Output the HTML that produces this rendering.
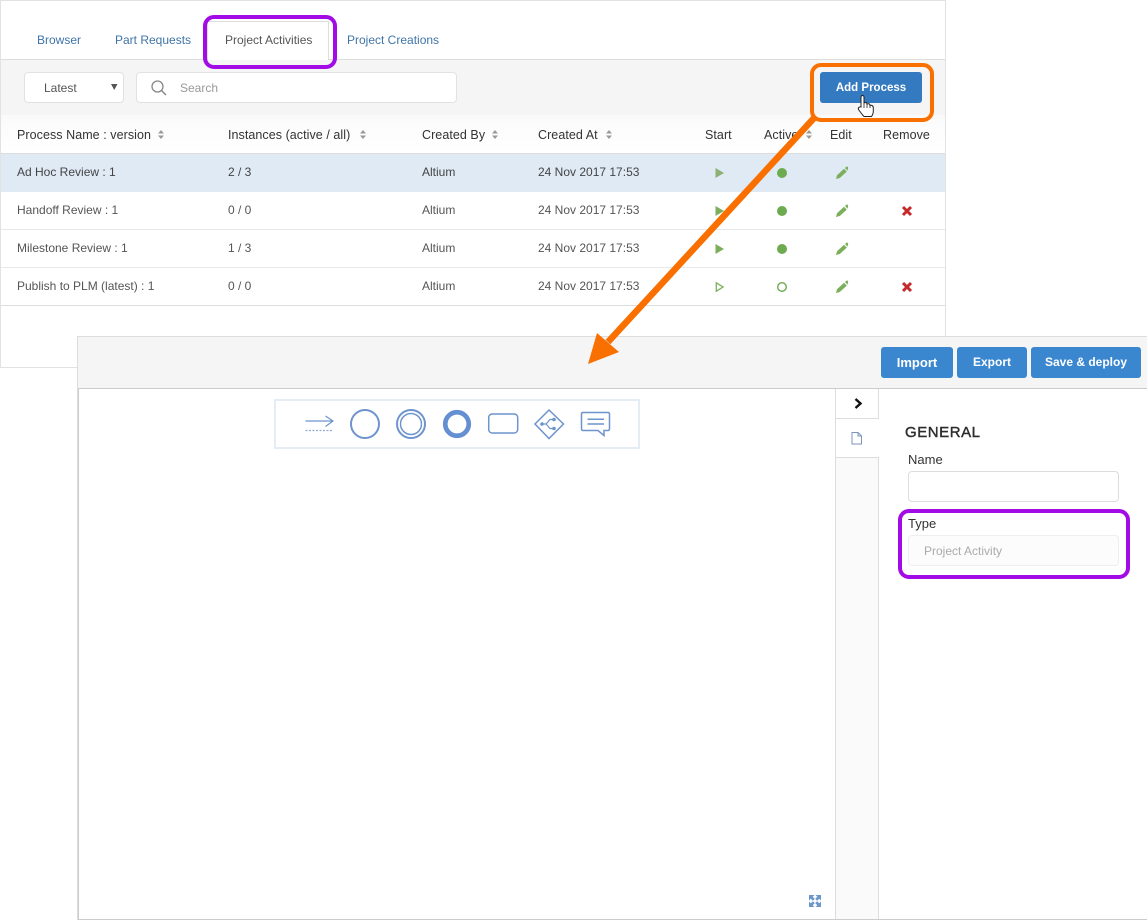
<!DOCTYPE html>
<html><head><meta charset="utf-8">
<style>
html,body{margin:0;padding:0;background:#fff;}
body{width:1147px;height:920px;position:relative;overflow:hidden;font-family:"Liberation Sans",sans-serif;}
.a{position:absolute;}
.t{position:absolute;white-space:nowrap;line-height:16px;}
.tab{font-size:12px;color:#3f74a8;top:32px;}
.h{font-size:12.500px;color:#333;top:127px;letter-spacing:.06px;}
.c{font-size:12px;color:#555;}
.hl{position:absolute;left:1px;width:944px;height:1px;background:#e8e8e8;}
.btn{position:absolute;background:#3a87cf;border-radius:3px;color:#fff;font-weight:bold;font-size:12px;text-align:center;line-height:31px;top:347px;height:31px;}
svg{position:absolute;overflow:visible;}
</style></head><body>

<!-- top panel -->
<div class="a" style="left:0;top:0;width:946px;height:368px;border:1px solid #e2e2e2;box-sizing:border-box;background:#fff;"></div>
<div class="a" style="left:1px;top:59px;width:944px;height:1px;background:#ddd;"></div>
<div class="a" style="left:1px;top:60px;width:944px;height:55px;background:#f5f5f5;"></div>
<div class="a" style="left:207px;top:21px;width:122px;height:39px;background:#fff;border:1px solid #ddd;border-bottom:none;box-sizing:border-box;"></div>
<div class="t tab" style="left:37px;">Browser</div>
<div class="t tab" style="left:115px;">Part Requests</div>
<div class="t tab" style="left:225px;color:#555;">Project Activities</div>
<div class="t tab" style="left:347px;">Project Creations</div>

<div class="a" style="left:24px;top:72px;width:100px;height:31px;background:#fff;border:1px solid #e2e2e2;border-radius:4px;box-sizing:border-box;"></div>
<div class="t" style="left:44px;top:80px;font-size:12px;color:#555;">Latest</div>
<svg style="left:111px;top:84px" width="7" height="6"><path d="M0 0H6.500L3.250 6Z" fill="#555"/></svg>
<div class="a" style="left:136px;top:72px;width:321px;height:31px;background:#fff;border:1px solid #e2e2e2;border-radius:4px;box-sizing:border-box;"></div>
<svg style="left:151px;top:80px" width="16" height="16"><circle cx="6.500" cy="6.500" r="5.500" fill="none" stroke="#888" stroke-width="1.300"/><path d="M10.500 10.500L15 15" stroke="#888" stroke-width="1.500"/></svg>
<div class="t" style="left:180px;top:80px;font-size:12px;color:#999;">Search</div>

<!-- header -->
<div class="a" style="left:1px;top:115px;width:944px;height:38px;background:linear-gradient(#fafafa,#fff);"></div>
<div class="a" style="left:1px;top:153px;width:944px;height:1px;background:#ddd;"></div>
<div class="t h" style="left:17px;">Process Name : version</div>
<div class="t h" style="left:228px;">Instances (active / all)</div>
<div class="t h" style="left:422px;">Created By</div>
<div class="t h" style="left:538px;">Created At</div>
<div class="t h" style="left:705px;">Start</div>
<div class="t h" style="left:764px;">Active</div>
<div class="t h" style="left:830px;">Edit</div>
<div class="t h" style="left:883px;">Remove</div>
<svg width="7" height="9" style="left:158px;top:130px"><path d="M0 3.500L3 0L6 3.500ZM0 5.500L3 9L6 5.500Z" fill="#999"/></svg>
<svg width="7" height="9" style="left:360px;top:130px"><path d="M0 3.500L3 0L6 3.500ZM0 5.500L3 9L6 5.500Z" fill="#999"/></svg>
<svg width="7" height="9" style="left:492px;top:130px"><path d="M0 3.500L3 0L6 3.500ZM0 5.500L3 9L6 5.500Z" fill="#999"/></svg>
<svg width="7" height="9" style="left:606px;top:130px"><path d="M0 3.500L3 0L6 3.500ZM0 5.500L3 9L6 5.500Z" fill="#999"/></svg>
<svg width="7" height="9" style="left:806px;top:130px"><path d="M0 3.500L3 0L6 3.500ZM0 5.500L3 9L6 5.500Z" fill="#999"/></svg>

<!-- rows -->
<div class="a" style="left:1px;top:154px;width:944px;height:38px;background:#dfeaf5;"></div>
<div class="hl" style="top:229px;"></div>
<div class="hl" style="top:267px;"></div>
<div class="hl" style="top:305px;background:#ddd;"></div>

<div class="t c" style="left:17px;top:164px;color:#444;">Ad Hoc Review : 1</div>
<div class="t c" style="left:228px;top:164px;color:#444;">2 / 3</div>
<div class="t c" style="left:422px;top:164px;color:#444;">Altium</div>
<div class="t c" style="left:538px;top:164px;color:#444;">24 Nov 2017 17:53</div>

<div class="t c" style="left:17px;top:202px;">Handoff Review : 1</div>
<div class="t c" style="left:228px;top:202px;">0 / 0</div>
<div class="t c" style="left:422px;top:202px;">Altium</div>
<div class="t c" style="left:538px;top:202px;">24 Nov 2017 17:53</div>

<div class="t c" style="left:17px;top:240px;">Milestone Review : 1</div>
<div class="t c" style="left:228px;top:240px;">1 / 3</div>
<div class="t c" style="left:422px;top:240px;">Altium</div>
<div class="t c" style="left:538px;top:240px;">24 Nov 2017 17:53</div>

<div class="t c" style="left:17px;top:278px;">Publish to PLM (latest) : 1</div>
<div class="t c" style="left:228px;top:278px;">0 / 0</div>
<div class="t c" style="left:422px;top:278px;">Altium</div>
<div class="t c" style="left:538px;top:278px;">24 Nov 2017 17:53</div>

<!-- row icons -->
<svg width="1147" height="920" style="left:0;top:0;">
<g fill="#7cae5c">
<path d="M715.500 168L724 173L715.500 178Z" fill="#8db174"/>
<path d="M715.500 206L724 211L715.500 216Z"/>
<path d="M715.500 244L724 249L715.500 254Z"/>
</g>
<path d="M716.300 282.800L723 287L716.300 291.200Z" fill="none" stroke="#7cae5c" stroke-width="1.300"/>
<circle cx="782" cy="173" r="5" fill="#6dab50"/>
<circle cx="782" cy="211" r="5" fill="#6dab50"/>
<circle cx="782" cy="249" r="5" fill="#6dab50"/>
<circle cx="782" cy="287" r="4.300" fill="none" stroke="#6dab50" stroke-width="1.400"/>
<g fill="#7cae5c">
<path d="M836 179L837 175.300L844 168.800L846.800 171.600L839.800 178Z M845 168L846.300 166.800Q847 166.300 847.700 166.800L848 167.300Q848.500 168 848 168.700L847.500 170.700Z"/>
<path d="M836 217L837 213.300L844 206.800L846.800 209.600L839.800 216Z M845 206L846.300 204.800Q847 204.300 847.700 204.800L848 205.300Q848.500 206 848 206.700L847.500 208.700Z"/>
<path d="M836 255L837 251.300L844 244.800L846.800 247.600L839.800 254Z M845 244L846.300 242.800Q847 242.300 847.700 242.800L848 243.300Q848.500 244 848 244.700L847.500 246.700Z"/>
<path d="M836 293L837 289.300L844 282.800L846.800 285.600L839.800 292Z M845 282L846.300 280.800Q847 280.300 847.700 280.800L848 281.300Q848.500 282 848 282.700L847.500 284.700Z"/>
</g>
<path d="M903 207L911 215M911 207L903 215" stroke="#c4292c" stroke-width="3"/>
<path d="M903 283L911 291M911 283L903 291" stroke="#c4292c" stroke-width="3"/>
</svg>

<!-- lower panel -->
<div class="a" style="left:77px;top:336px;width:1070px;height:52px;background:#f5f5f5;border-top:1px solid #ddd;border-left:1px solid #ddd;box-sizing:border-box;"></div>
<div class="a" style="left:78px;top:388px;width:1069px;height:532px;background:#fff;border:1px solid #ccc;border-right:none;box-sizing:border-box;"></div>
<div class="a" style="left:77px;top:388px;width:1px;height:532px;background:#ddd;"></div>
<div class="a" style="left:835px;top:389px;width:44px;height:530px;background:#fafafa;border-left:1px solid #ddd;border-right:1px solid #ddd;box-sizing:border-box;"></div>
<div class="a" style="left:835px;top:389px;width:44px;height:30px;background:#fff;border:1px solid #ddd;border-top:none;box-sizing:border-box;"></div>
<div class="a" style="left:836px;top:419px;width:43px;height:39px;background:#fff;border-bottom:1px solid #ddd;box-sizing:border-box;"></div>

<div class="btn" style="left:881px;width:72px;font-size:13px;">Import</div>
<div class="btn" style="left:957px;width:70px;">Export</div>
<div class="btn" style="left:1031px;width:110px;">Save &amp; deploy</div>

<svg width="1147" height="920" style="left:0;top:0;">
<path d="M855.500 399L860.500 403.500L855.500 408" fill="none" stroke="#111" stroke-width="2.400"/>
<path d="M852 432.500H858L861.500 436V444H852Z M858 432.500V436H861.500" fill="none" stroke="#7b93bd" stroke-width="1"/>
<!-- expand icon -->
<g fill="#6b97cb">
<path d="M809 895H814.500L812.700 896.800L814.800 898.900L812.900 900.800L810.800 898.700L809 900.500Z"/>
<path d="M821 895H815.500L817.300 896.800L815.200 898.900L817.100 900.800L819.200 898.700L821 900.500Z"/>
<path d="M809 907H814.500L812.700 905.200L814.800 903.100L812.900 901.200L810.800 903.300L809 901.500Z"/>
<path d="M821 907H815.500L817.300 905.200L815.200 903.100L817.100 901.200L819.200 903.300L821 901.500Z"/>
</g>
<!-- toolbar -->
<rect x="275" y="400" width="364" height="48" fill="#fff" stroke="#e6ecf6" stroke-width="2"/>
<g fill="none" stroke="#6d94cc">
<path d="M305.500 421H333M325.500 416L333 421L325.500 426.500" stroke-width="1.200"/>
<path d="M305.500 430.500H333" stroke-width="1.200" stroke-dasharray="2 1.500" stroke="#8ea9d6"/>
<circle cx="365" cy="424" r="14" stroke-width="2"/>
<circle cx="411" cy="424" r="14" stroke-width="2"/>
<circle cx="411" cy="424" r="10.500" stroke-width="1.500"/>
<circle cx="457" cy="424" r="11.750" stroke-width="4.700" stroke="#648fd3"/>
<rect x="488.700" y="414" width="29" height="19" rx="3.500" stroke-width="1.500"/>
<path d="M549 410L563.500 424L549 438.500L535 424Z" stroke-width="1.500"/>
<path d="M542 424H546L550 419.500H553M546 424L550 428.500H553" stroke-width="1.200"/>
<path d="M583 412.500H608Q609.500 412.500 609.500 414V428.500Q609.500 430.500 608 430.500H604V435.500L598 430.500H583Q581.500 430.500 581.500 428.500V414Q581.500 412.500 583 412.500Z" stroke-width="1.500"/>
<path d="M587.500 419.300H604M587.500 424H604" stroke-width="1.500"/>
</g>
<g fill="#6d94cc"><circle cx="542" cy="424" r="1.800"/><circle cx="554" cy="419.500" r="1.800"/><circle cx="554" cy="428.500" r="1.800"/></g>
</svg>

<!-- right panel -->
<div class="t" style="left:905px;top:425px;font-size:15px;color:#2c2c2c;letter-spacing:.55px;-webkit-text-stroke:.4px #2c2c2c;">GENERAL</div>
<div class="t" style="left:908px;top:452px;font-size:13px;color:#333;">Name</div>
<div class="a" style="left:908px;top:471px;width:211px;height:31px;background:#fff;border:1px solid #ddd;border-radius:4px;box-sizing:border-box;"></div>
<div class="t" style="left:908px;top:516px;font-size:13px;color:#333;">Type</div>
<div class="a" style="left:908px;top:535px;width:211px;height:31px;background:#fcfcfc;border:1px solid #eee;border-radius:4px;box-sizing:border-box;"></div>
<div class="t" style="left:924px;top:543px;font-size:12px;color:#aaa;">Project Activity</div>

<!-- Add Process button -->
<div class="a" style="left:820px;top:72px;width:102px;height:31px;background:#337ac0;border-radius:3px;color:#fff;font-weight:bold;font-size:11.500px;text-align:center;line-height:32px;">Add Process</div>

<!-- annotations -->
<div class="a" style="left:203px;top:15px;width:134px;height:54px;border:4px solid #a20be6;border-radius:11px;box-sizing:border-box;"></div>
<div class="a" style="left:898px;top:509px;width:232px;height:70px;border:4px solid #a20be6;border-radius:11px;box-sizing:border-box;"></div>
<div class="a" style="left:810px;top:63px;width:124px;height:59px;border:4px solid #f97000;border-radius:11px;box-sizing:border-box;"></div>
<svg width="1147" height="920" style="left:0;top:0;">
<path d="M815 117L608 342" stroke="#f97000" stroke-width="6.500"/>
<path d="M588 364L597 333L619 352Z" fill="#f97000"/>
<!-- hand cursor -->
<path d="M861 107V97.500Q861 95.500 862.500 95.500Q864 95.500 864 97.500V103.500Q864 102.500 865.500 102.500Q867 102.500 867 104V104.500Q867.500 103.500 868.800 103.800Q870 104 870 105.500Q871 105 872 105.500Q873.300 106 873.300 108V111Q873.300 114 871.500 116.500H864Q862.500 115 861.500 113.500L858.500 109.500Q858 108 859 107.300Q860 106.700 861 107Z" fill="#fff" stroke="#222" stroke-width="1"/>
<path d="M864 103.500V108M867 104.500V108M870 105.500V108" stroke="#222" stroke-width=".8" fill="none"/>
</svg>
</body></html>
